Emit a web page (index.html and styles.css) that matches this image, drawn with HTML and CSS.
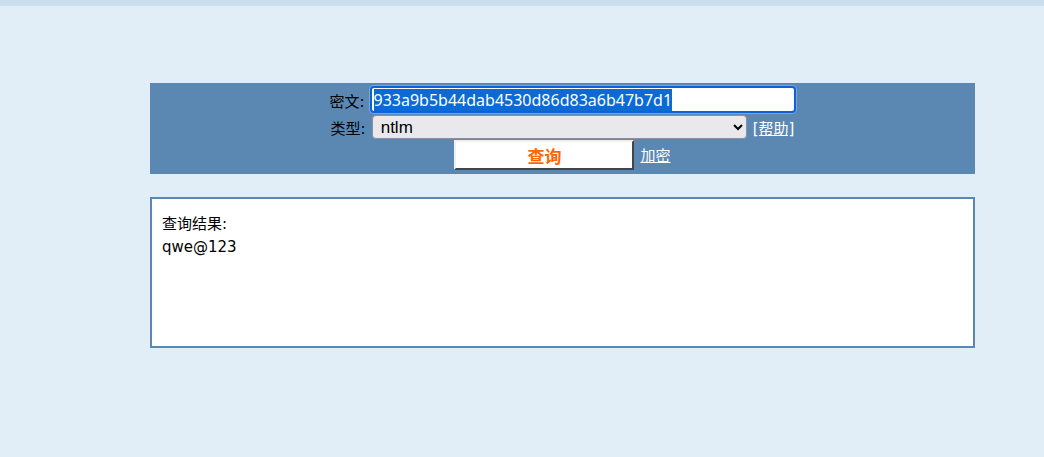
FILE: index.html
```html
<!DOCTYPE html>
<html lang="zh-CN">
<head>
    <meta charset="UTF-8">
    <title>查询</title>
    <link rel="stylesheet" href="styles.css">
    <script>
        window.onload = function () {
            const box = document.querySelector('.hash');
            box.focus();
            box.select();
        };
    </script>
</head>
<body>
    <div class="topbar"></div>
    <div class="main">
        <form class="panel" onsubmit="return false">
            <div class="row">
                <span class="label">密文:</span>
                <input type="text" class="hash" name="hash" value="933a9b5b44dab4530d86d83a6b47b7d1">
            </div>
            <div class="row">
                <span class="label">类型:</span>
                <select class="type" name="type">
                    <option>ntlm</option>
                    <option>md5</option>
                    <option>sha1</option>
                </select>
                <a href="#" class="link">[帮助]</a>
            </div>
            <div class="row">
                <input type="submit" class="btn" value="查询">
                <a href="#" class="link">加密</a>
            </div>
        </form>
        <div class="result">
            <div>查询结果:</div>
            <div>qwe@123</div>
        </div>
    </div>
</body>
</html>
```
FILE: styles.css
```css
body {
    margin: 0;
    background-color: #e1eef7;
    font-family: "DejaVu Sans", "Noto Sans CJK SC", sans-serif;
    font-size: 15px;
}
.topbar {
    height: 6px;
    background-color: #c9dfee;
}
.main {
    width: 825px;
    margin: 77px 0 0 150px;
}
.panel {
    background-color: #5b88b3;
    padding: 3px 0 4px;
}
.row {
    display: flex;
    justify-content: center;
    align-items: center;
    gap: 6px;
}
.label {
    color: #000;
}
.hash {
    width: 426px;
    height: 27px;
    margin: 0 0 2px -1px;
    padding: 0 2px;
    box-sizing: border-box;
    font-family: "Noto Sans", sans-serif;
    font-size: 16px;
    border: 2px solid #0b61d8;
    border-radius: 4px;
    outline: none;
    box-shadow: 0 0 0 1px #7aa6dc;
}
.hash::selection {
    background-color: #0b6ad6;
    color: #fff;
}
.type {
    width: 375px;
    height: 24px;
    padding-left: 4px;
    font-family: "Liberation Sans", sans-serif;
    font-size: 17px;
    background-color: #e9e9ed;
    border: 1px solid #8f8f9d;
    border-radius: 4px;
}
.link {
    color: #fff;
}
.btn {
    width: 180px;
    height: 30px;
    margin-top: 1px;
    font-family: "Noto Sans CJK SC", sans-serif;
    font-size: 17px;
    font-weight: bold;
    color: #ff6600;
    background-color: #fff;
    border: 2px outset #999;
    border-top-color: #f0f0f0;
    border-left-color: #f0f0f0;
    cursor: pointer;
}
.result {
    margin-top: 23px;
    height: 123px;
    padding: 14px 10px 10px;
    background-color: #fff;
    border: 2px solid #5b88b3;
    line-height: 23px;
}
```
